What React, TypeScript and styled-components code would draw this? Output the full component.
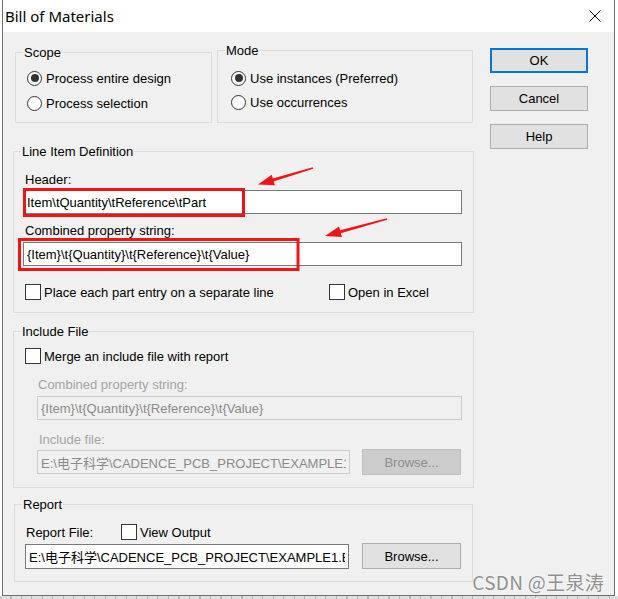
import React from "react";
import styled, { createGlobalStyle } from "styled-components";

const Global = createGlobalStyle`
  html, body { margin: 0; padding: 0; background: #fff; }
  body {
    font-family: "Liberation Sans", "Noto Sans CJK SC", sans-serif;
    font-size: 13px;
    color: #000;
  }
  * { box-sizing: border-box; }
`;

const FONT = `"Liberation Sans", "Noto Sans CJK SC", sans-serif`;

const Page = styled.div`
  position: relative;
  width: 618px;
  height: 599px;
  overflow: hidden;
  padding-left: 2px;
`;

const Window = styled.div`
  width: 613px;
  border: 1px solid #707070;
  border-top: none;
  background: #f0f0f0;
`;

const TitleBar = styled.div`
  height: 32px;
  background: #fff;
  display: flex;
  align-items: center;
  justify-content: space-between;
  padding: 0 13px 0 2px;
  font-family: "Noto Sans", sans-serif;
  font-size: 15px;
`;

const Body = styled.div`
  display: grid;
  grid-template-columns: 461px 98px;
  column-gap: 16px;
  align-items: start;
  padding: 16px 0 13px 10px;
`;

const MainCol = styled.div`
  display: flex;
  flex-direction: column;
  align-items: flex-start;
  margin-top: 2px;
`;

const TopRow = styled.div`
  display: flex;
  align-items: flex-start;
  gap: 5px;
  padding-left: 2px;
`;

const GroupBox = styled.div<{ $w: number; $mt?: number; $ml?: number }>`
  width: ${(p) => p.$w}px;
  margin-top: ${(p) => p.$mt ?? 0}px;
  margin-left: ${(p) => p.$ml ?? 0}px;
  border: 1px solid #dcdcdc;
`;

const GroupTitle = styled.div`
  width: fit-content;
  margin: -8px 0 0 7px;
  padding: 0 1px;
  background: #f0f0f0;
  line-height: 15px;
  white-space: nowrap;
`;

const GroupBody = styled.div<{ $pad: string; $gap?: number }>`
  display: flex;
  flex-direction: column;
  align-items: flex-start;
  padding: ${(p) => p.$pad};
  gap: ${(p) => p.$gap ?? 0}px;
`;

const RadioRow = styled.label`
  display: flex;
  align-items: center;
  gap: 4px;
  height: 20px;
  white-space: nowrap;
`;

const RadioDot = styled.span<{ $on?: boolean }>`
  flex: none;
  width: 15px;
  height: 15px;
  border-radius: 50%;
  border: 1px solid #333;
  background: #fff;
  display: inline-flex;
  align-items: center;
  justify-content: center;
  &::after {
    content: "";
    width: 8px;
    height: 8px;
    border-radius: 50%;
    background: ${(p) => (p.$on ? "#333" : "transparent")};
  }
`;

const CheckLine = styled.div<{ $mt?: number }>`
  display: flex;
  align-items: center;
  margin-top: ${(p) => p.$mt ?? 0}px;
`;

const CheckItem = styled.label<{ $w?: number; $ml?: number }>`
  display: flex;
  align-items: center;
  gap: 3px;
  height: 16px;
  width: ${(p) => (p.$w ? `${p.$w}px` : "auto")};
  margin-left: ${(p) => p.$ml ?? 0}px;
  white-space: nowrap;
`;

const CheckBox = styled.span`
  flex: none;
  width: 16px;
  height: 16px;
  border: 1px solid #333;
  background: #fff;
`;

const FieldLabel = styled.div<{ $mt?: number; $ml?: number; $off?: boolean; $w?: number }>`
  line-height: 15px;
  margin-top: ${(p) => p.$mt ?? 0}px;
  margin-left: ${(p) => p.$ml ?? 0}px;
  width: ${(p) => (p.$w ? `${p.$w}px` : "auto")};
  color: ${(p) => (p.$off ? "#a3a3a3" : "#000")};
  white-space: nowrap;
`;

const TextField = styled.input<{ $w: number; $h?: number; $mt?: number; $ml?: number; $off?: boolean }>`
  display: block;
  width: ${(p) => p.$w}px;
  height: ${(p) => p.$h ?? 24}px;
  margin: ${(p) => p.$mt ?? 0}px 0 0 ${(p) => p.$ml ?? 0}px;
  padding: 0 3px;
  border: 1px solid ${(p) => (p.$off ? "#cccccc" : "#7a7a7a")};
  border-radius: 0;
  background: ${(p) => (p.$off ? "#f0f0f0" : "#fff")};
  color: ${(p) => (p.$off ? "#8a8a8a" : "#000")};
  font-family: ${FONT};
  font-size: 13px;
  outline: none;
`;

const FieldRow = styled.div<{ $mt?: number; $ml?: number; $gap: number }>`
  display: flex;
  align-items: center;
  height: 26px;
  gap: ${(p) => p.$gap}px;
  margin-top: ${(p) => p.$mt ?? 0}px;
  margin-left: ${(p) => p.$ml ?? 0}px;
`;

const ButtonCol = styled.div`
  display: flex;
  flex-direction: column;
  gap: 13px;
`;

const Button = styled.button<{ $primary?: boolean; $off?: boolean; $w?: number; $h?: number }>`
  width: ${(p) => p.$w ?? 98}px;
  height: ${(p) => p.$h ?? 25}px;
  padding: 0;
  background: ${(p) => (p.$off ? "#cccccc" : "#e1e1e1")};
  border: ${(p) =>
    p.$primary ? "2px solid #0078d7" : p.$off ? "1px solid #bfbfbf" : "1px solid #adadad"};
  color: ${(p) => (p.$off ? "#8d8d8d" : "#000")};
  font-family: ${FONT};
  font-size: 13px;
  border-radius: 0;
`;

const BottomStrip = styled.div`
  height: 3px;
  width: 618px;
  margin-left: -2px;
  background: repeating-linear-gradient(
    to right,
    #bdbdbd 0 1px,
    #dedede 1px 10.5px
  );
`;

const Overlay = styled.svg`
  position: absolute;
  left: 0;
  top: 0;
  pointer-events: none;
`;

const Watermark = styled.div`
  position: absolute;
  right: 14px;
  bottom: 7px;
  font-family: "Noto Sans CJK SC", sans-serif;
  font-size: 19px;
  line-height: 20px;
  letter-spacing: 0.3px;
  color: #8f8f8f;
  text-shadow: 0 0 2px #fff, 0 0 1px #fff;
  white-space: nowrap;
`;

function arrowShapes(x1: number, y1: number, x2: number, y2: number) {
  const dx = x2 - x1;
  const dy = y2 - y1;
  const L = Math.hypot(dx, dy);
  const ux = dx / L;
  const uy = dy / L;
  const nx = -uy;
  const ny = ux;
  const head = 16;
  const half = 5.5;
  const bx = x2 - ux * head;
  const by = y2 - uy * head;
  const shaft = [
    [x1 + nx * 0.8, y1 + ny * 0.8],
    [bx + ux * 2 + nx * 1.6, by + uy * 2 + ny * 1.6],
    [bx + ux * 2 - nx * 1.6, by + uy * 2 - ny * 1.6],
    [x1 - nx * 0.8, y1 - ny * 0.8],
  ]
    .map((p) => p.join(","))
    .join(" ");
  const tip = [
    [x2, y2],
    [bx + nx * half, by + ny * half],
    [bx - nx * half, by - ny * half],
  ]
    .map((p) => p.join(","))
    .join(" ");
  return { shaft, tip };
}

const RED = "#f21414";

function Annotations() {
  const a1 = arrowShapes(313, 168, 258, 184.5);
  const a2 = arrowShapes(387, 219, 325, 236);
  return (
    <Overlay width={618} height={599} viewBox="0 0 618 599">
      <rect x={24.5} y={189.5} width={219} height={26} fill="none" stroke={RED} strokeWidth={3} />
      <rect x={19.5} y={239.5} width={278.5} height={30} fill="none" stroke={RED} strokeWidth={3} />
      <polygon points={a1.shaft} fill={RED} />
      <polygon points={a1.tip} fill={RED} />
      <polygon points={a2.shaft} fill={RED} />
      <polygon points={a2.tip} fill={RED} />
    </Overlay>
  );
}

function CloseIcon() {
  return (
    <svg width="12" height="12" viewBox="0 0 12 12">
      <path d="M0.5 0.5 L11.5 11.5 M11.5 0.5 L0.5 11.5" stroke="#000" strokeWidth="1" fill="none" />
    </svg>
  );
}

export default function App() {
  const combined = "{Item}\\t{Quantity}\\t{Reference}\\t{Value}";
  const filePath = "E:\\电子科学\\CADENCE_PCB_PROJECT\\EXAMPLE1.BOM";
  return (
    <Page>
      <Global />
      <Window>
        <TitleBar>
          <span>Bill of Materials</span>
          <CloseIcon />
        </TitleBar>
        <Body>
          <MainCol>
            <TopRow>
              <GroupBox $w={197} $mt={2}>
                <GroupTitle>Scope</GroupTitle>
                <GroupBody $pad="8px 0 9px 11px" $gap={5}>
                  <RadioRow>
                    <RadioDot $on />
                    Process entire design
                  </RadioRow>
                  <RadioRow>
                    <RadioDot />
                    Process selection
                  </RadioRow>
                </GroupBody>
              </GroupBox>
              <GroupBox $w={256}>
                <GroupTitle>Mode</GroupTitle>
                <GroupBody $pad="10px 0 10px 13px" $gap={4}>
                  <RadioRow>
                    <RadioDot $on />
                    Use instances (Preferred)
                  </RadioRow>
                  <RadioRow>
                    <RadioDot />
                    Use occurrences
                  </RadioRow>
                </GroupBody>
              </GroupBox>
            </TopRow>

            <GroupBox $w={461} $mt={28}>
              <GroupTitle>Line Item Definition</GroupTitle>
              <GroupBody $pad="0 11px 12px 9px">
                <FieldLabel $mt={13} $ml={2}>Header:</FieldLabel>
                <TextField $w={439} $mt={3} readOnly value={"Item\\tQuantity\\tReference\\tPart"} />
                <FieldLabel $mt={9} $ml={2}>Combined property string:</FieldLabel>
                <TextField $w={439} $mt={4} readOnly value={combined} />
                <CheckLine $mt={18}>
                  <CheckItem $w={304} $ml={2}>
                    <CheckBox />
                    Place each part entry on a separate line
                  </CheckItem>
                  <CheckItem>
                    <CheckBox />
                    Open in Excel
                  </CheckItem>
                </CheckLine>
              </GroupBody>
            </GroupBox>

            <GroupBox $w={461} $mt={18}>
              <GroupTitle>Include File</GroupTitle>
              <GroupBody $pad="0 11px 12px 11px">
                <CheckLine $mt={9}>
                  <CheckItem>
                    <CheckBox />
                    Merge an include file with report
                  </CheckItem>
                </CheckLine>
                <FieldLabel $mt={13} $ml={13} $off>Combined property string:</FieldLabel>
                <TextField $w={425} $mt={4} $ml={12} $off readOnly disabled value={combined} />
                <FieldLabel $mt={12} $ml={14} $off>Include file:</FieldLabel>
                <FieldRow $mt={2} $ml={12} $gap={12}>
                  <TextField $w={313} $off readOnly disabled value={filePath} />
                  <Button $off $w={99} $h={26}>Browse...</Button>
                </FieldRow>
              </GroupBody>
            </GroupBox>

            <GroupBox $w={459} $mt={16} $ml={1}>
              <GroupTitle>Report</GroupTitle>
              <GroupBody $pad="0 10px 12px 10px">
                <CheckLine $mt={12}>
                  <FieldLabel $ml={1} $w={95}>Report File:</FieldLabel>
                  <CheckItem>
                    <CheckBox />
                    View Output
                  </CheckItem>
                </CheckLine>
                <FieldRow $mt={3} $gap={13}>
                  <TextField $w={324} $h={25} readOnly value={filePath} />
                  <Button $w={99} $h={26}>Browse...</Button>
                </FieldRow>
              </GroupBody>
            </GroupBox>
          </MainCol>

          <ButtonCol>
            <Button $primary>OK</Button>
            <Button>Cancel</Button>
            <Button>Help</Button>
          </ButtonCol>
        </Body>
      </Window>
      <BottomStrip />
      <Annotations />
      <Watermark>CSDN @王泉涛</Watermark>
    </Page>
  );
}
